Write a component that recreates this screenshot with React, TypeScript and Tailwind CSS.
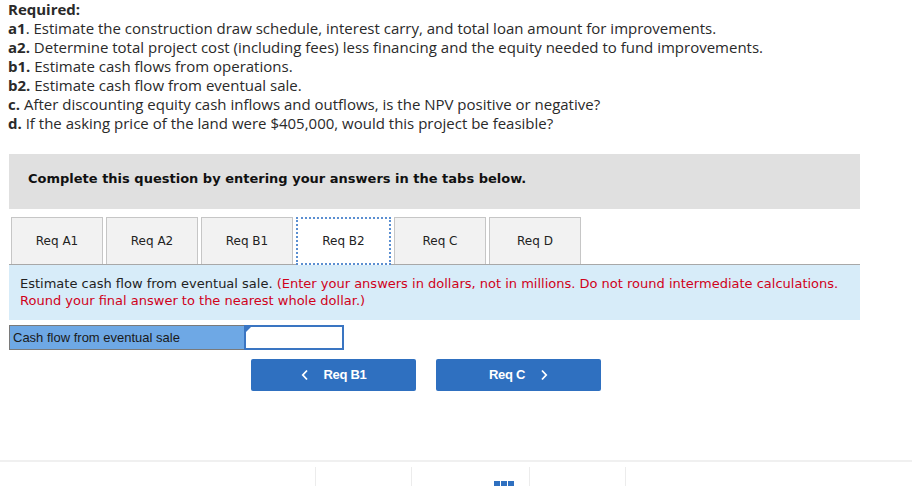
import React from 'react';

const tabs = ['Req A1', 'Req A2', 'Req B1', 'Req B2', 'Req C', 'Req D'];

const Tab: React.FC<{ label: string; active?: boolean }> = ({ label, active }) => (
  <div
    className={
      active
        ? 'w-[95px] h-[48px] flex items-center justify-center bg-white border-2 border-dotted border-[#5b8fd1] -mb-px relative z-10'
        : 'w-[92px] h-[47px] flex items-center justify-center bg-[#f2f2f2] border border-[#c6c6c6] border-b-0'
    }
  >
    <span className="text-[12px] text-[#222]">{label}</span>
  </div>
);

export default function App() {
  return (
    <div className="w-[912px] h-[486px] bg-white overflow-hidden relative" style={{ fontFamily: 'Verdana, "DejaVu Sans", sans-serif' }}>
      <div className="pl-[8px] text-[15px] leading-[19px] text-[#2a2a2a]" style={{ fontFamily: '"Open Sans", sans-serif' }}>
        <p className="font-bold">Required:</p>
        <p><b>a1</b>. Estimate the construction draw schedule, interest carry, and total loan amount for improvements.</p>
        <p><b>a2.</b> Determine total project cost (including fees) less financing and the equity needed to fund improvements.</p>
        <p><b>b1.</b> Estimate cash flows from operations.</p>
        <p><b>b2.</b> Estimate cash flow from eventual sale.</p>
        <p><b>c.</b> After discounting equity cash inflows and outflows, is the NPV positive or negative?</p>
        <p><b>d.</b> If the asking price of the land were $405,000, would this project be feasible?</p>
      </div>

      <div className="ml-[9px] w-[851px] mt-[21px] h-[55px] bg-[#e0e0e0] flex items-center pl-[19px] pb-[6px]">
        <span className="text-[13px] font-bold text-[#111]">Complete this question by entering your answers in the tabs below.</span>
      </div>

      <div className="ml-[11px] mt-[8px] flex gap-[3px] items-end">
        {tabs.map((t) => (
          <Tab key={t} label={t} active={t === 'Req B2'} />
        ))}
      </div>

      <div className="ml-[9px] w-[851px] h-[56px] bg-[#d7ecf9] border-t border-[#a8a8a8] pl-[11px] pt-[10px] text-[13px] leading-[17px]">
        <p className="text-[#d0021b]">
          <span className="text-[#222]">Estimate cash flow from eventual sale.</span> (Enter your answers in dollars, not in millions. Do not round intermediate calculations. Round your final answer to the nearest whole dollar.)
        </p>
      </div>

      <div className="ml-[9px] mt-[5px] flex h-[25px] w-[335px]" style={{ fontFamily: '"Liberation Sans", Arial, sans-serif' }}>
        <div className="w-[235px] h-full bg-[#6ea8e5] border border-[#7a7a7a] border-r-0 flex items-center pl-[3px] text-[13px] text-[#1a1a1a]">
          Cash flow from eventual sale
        </div>
        <div className="flex-1 h-full bg-white border-2 border-[#3a75c2] relative">
          <div className="absolute left-0 top-0 w-0 h-0 border-t-[5px] border-r-[5px] border-t-[#3a75c2] border-r-transparent" />
        </div>
      </div>

      <div className="flex ml-[251px] mt-[9px] gap-[20px]" style={{ fontFamily: '"Liberation Sans", Arial, sans-serif' }}>
        <button className="w-[165px] h-[32px] bg-[#2f70c0] rounded-[2px] flex items-center justify-center text-white text-[13px] font-bold">
          <svg width="8" height="12" viewBox="0 0 8 12" className="mr-[15px]">
            <path d="M6 1.5 L1.8 6 L6 10.5" stroke="white" strokeWidth="1.8" fill="none" />
          </svg>
          <span className="tracking-[-0.3px]">Req B1</span>
        </button>
        <button className="w-[165px] h-[32px] bg-[#2f70c0] rounded-[2px] flex items-center justify-center text-white text-[13px] font-bold">
          <span className="tracking-[-0.3px]">Req C</span>
          <svg width="8" height="12" viewBox="0 0 8 12" className="ml-[15px]">
            <path d="M2 1.5 L6.2 6 L2 10.5" stroke="white" strokeWidth="1.8" fill="none" />
          </svg>
        </button>
      </div>

      <div className="absolute left-0 top-[460px] w-full border-t-2 border-[#f0f0f0]">
        <div className="flex">
          <div className="w-[315px]" />
          <div className="w-[96px] h-[20px] mt-[5px] border-l border-[#ececec]" />
          <div className="w-[118px] h-[20px] mt-[5px] border-l border-[#ececec] relative">
            <div className="absolute left-[82px] top-[14px] flex gap-[1px]">
              <div className="w-[6px] h-[6px] bg-[#2f70c0]" />
              <div className="w-[6px] h-[6px] bg-[#2f70c0]" />
              <div className="w-[6px] h-[6px] bg-[#2f70c0]" />
            </div>
          </div>
          <div className="w-[97px] h-[20px] mt-[5px] border-l border-[#ececec] border-r" />
        </div>
      </div>
    </div>
  );
}
